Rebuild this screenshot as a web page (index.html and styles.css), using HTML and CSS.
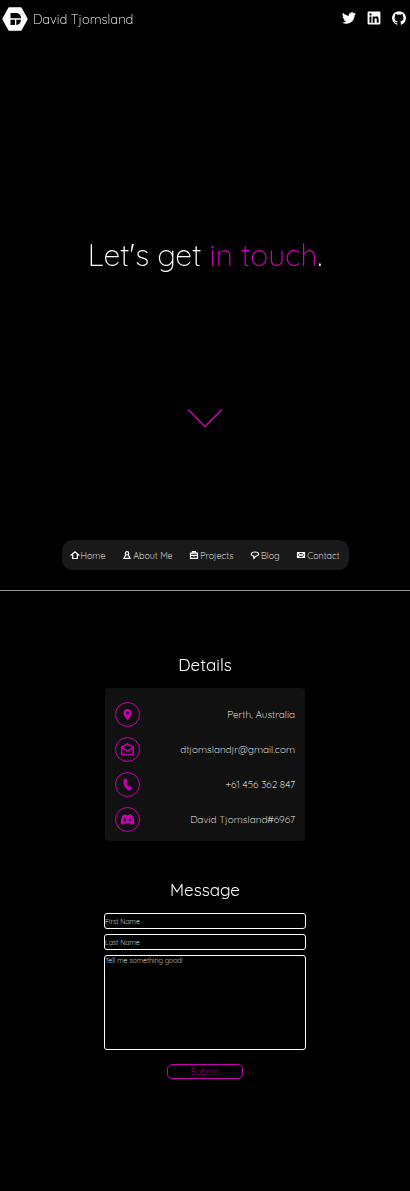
FILE: index.html
```html
<!DOCTYPE html>
<html lang="en">
<head>
<meta charset="utf-8">
<meta name="viewport" content="width=device-width, initial-scale=1">
<title>David Tjomsland | Contact</title>
<link rel="stylesheet" href="styles.css">
</head>
<body>
<div class="hero">
  <header class="header">
    <a class="brand" href="#">
      <svg class="logo" viewBox="0 0 26 24" aria-hidden="true"><path fill="#fff" d="M7 1h12l6 11-6 11H7L1 12z" stroke="#fff" stroke-width="1.500" stroke-linejoin="round"/><path d="M8.500 6H15q4 1 4 5.200H8.500zM8.500 12.800H13V18H8.500zM14.300 12.800H19Q18.500 17.500 14.300 18z"/></svg>
      <span>David Tjomsland</span>
    </a>
    <div class="social">
      <a href="#" aria-label="Twitter"><svg viewBox="0 0 24 24"><path d="M23.950 4.570a10 10 0 0 1-2.820.77 4.960 4.960 0 0 0 2.160-2.720 9.900 9.900 0 0 1-3.120 1.190 4.920 4.920 0 0 0-8.380 4.480C7.690 8.090 4.070 6.130 1.640 3.160a4.920 4.920 0 0 0 1.520 6.570 4.900 4.900 0 0 1-2.230-.61v.06a4.920 4.920 0 0 0 3.950 4.830 5 5 0 0 1-2.210.08 4.940 4.940 0 0 0 4.600 3.420A9.870 9.870 0 0 1 0 19.540a14 14 0 0 0 7.550 2.210c9.050 0 14-7.500 14-13.980v-.64a9.900 9.900 0 0 0 2.400-2.560z"/></svg></a>
      <a href="#" aria-label="LinkedIn"><svg viewBox="0 0 24 24"><path fill-rule="evenodd" d="M3 1h18q2 0 2 2v18q0 2-2 2H3q-2 0-2-2V3q0-2 2-2zm1.300 8.300V20h3.300V9.300zM6 4a2 2 0 1 0 0 4 2 2 0 0 0 0-4zm3.700 5.300V20H13v-5.300c0-3.200 3.700-3.200 3.700 0V20H20v-6.500c0-5.200-5.100-5.500-7-2.700V9.300z"/></svg></a>
      <a href="#" aria-label="GitHub"><svg viewBox="0 0 24 24"><path d="M12 .3a12 12 0 0 0-3.790 23.390c.6.110.820-.26.820-.58v-2.230c-3.340.72-4.040-1.410-4.040-1.410-.55-1.390-1.340-1.760-1.340-1.760-1.090-.74.080-.73.080-.73 1.210.08 1.840 1.240 1.840 1.240 1.070 1.830 2.810 1.300 3.490 1 .11-.78.420-1.310.76-1.610-2.660-.3-5.460-1.330-5.460-5.930 0-1.310.47-2.380 1.240-3.220-.13-.3-.54-1.520.11-3.180 0 0 1.010-.32 3.300 1.230a11.500 11.500 0 0 1 6.010 0c2.290-1.550 3.300-1.230 3.300-1.230.65 1.660.24 2.880.12 3.180.77.840 1.230 1.910 1.230 3.220 0 4.610-2.810 5.620-5.480 5.920.43.370.82 1.100.82 2.220v3.290c0 .32.220.69.830.57A12 12 0 0 0 12 .3z"/></svg></a>
    </div>
  </header>
  <h1 class="headline">Let's get <span class="accent">in touch</span>.</h1>
  <a class="down" href="#details" aria-label="Scroll to details"><svg viewBox="0 0 36 20"><path d="M1 1.500 18 18.500 35 1.500"/></svg></a>
  <nav class="nav">
    <a href="#"><svg viewBox="0 0 8 8"><path d="M.3 4 4 .7 7.700 4H6.300v3.500H1.700V4z"/></svg>Home</a>
    <a href="#"><svg viewBox="0 0 8 8"><circle cx="4" cy="2.300" r="1.700"/><path d="M2.700 3.700 1 7.400h6L5.300 3.700"/></svg>About Me</a>
    <a href="#"><svg viewBox="0 0 8 8"><path d="M.5 2.200h7v5.200h-7zM2.500 2V.6h3V2M.5 4.300h7M3.300 5h1.400"/></svg>Projects</a>
    <a href="#"><svg viewBox="0 0 8 8"><path d="M2.700 5C-1 4.500-.3 1 4 1s5 3.500 1 4L2.900 7.300z"/></svg>Blog</a>
    <a href="#"><svg viewBox="0 0 8 8"><path d="M.5 1.500h7v5h-7zM1 2l3 2.500L7 2M1 6l1.700-1.700M7 6 5.300 4.300"/></svg>Contact</a>
  </nav>
</div>
<main class="main">
  <section class="section" id="details">
    <h2>Details</h2>
    <ul class="card">
      <li><span class="ring"><svg viewBox="0 0 16 16"><path fill-rule="evenodd" d="M8 2a4.400 4.400 0 0 0-4.400 4.400C3.600 9 8 14 8 14s4.400-5 4.400-7.600A4.400 4.400 0 0 0 8 2zm0 2.800a1.600 1.600 0 1 1 0 3.200 1.600 1.600 0 0 1 0-3.200z"/></svg></span>Perth, Australia</li>
      <li><span class="ring"><svg viewBox="0 0 16 16"><path class="line" d="M1.800 5.500 8 2l6.200 3.500v8H1.800zM1.800 6 8 9.700 14.200 6"/></svg></span>dtjomslandjr@gmail.com</li>
      <li><span class="ring"><svg viewBox="0 0 16 16"><path d="M4.300 2 7 1.500l1 3.700-1.400 1.200q.5 2.300 2.300 3.700l1.900-.7 2.400 2.800-1.900 2C6.500 15.200 2 7 4.300 2z"/></svg></span>+61 456 362 847</li>
      <li><span class="ring"><svg viewBox="0 0 16 16"><path fill-rule="evenodd" d="M3 3.300 6 2.400l.6 1h2.800l.6-1 3 .9q2.500 4 2.300 8.900L12 13.900l-1-1.700H5l-1 1.700-3.300-1.700Q.5 7.300 3 3.300zm2.500 3.600a1.500 1.500 0 1 0 0 3 1.500 1.500 0 0 0 0-3zm5 0a1.500 1.500 0 1 0 0 3 1.500 1.500 0 0 0 0-3z"/></svg></span>David Tjomsland#6967</li>
    </ul>
  </section>
  <section class="section">
    <h2>Message</h2>
    <form class="form">
      <input type="text" aria-label="First Name" placeholder="First Name">
      <input type="text" aria-label="Last Name" placeholder="Last Name">
      <textarea aria-label="Message" placeholder="Tell me something good!"></textarea>
      <button type="submit">Submit</button>
    </form>
  </section>
</main>
</body>
</html>
```
FILE: styles.css
```css
* { box-sizing: border-box; }
body {
  margin: 0;
  background: #000;
  color: #fff;
  font-family: Quicksand, Lato, sans-serif;
  font-weight: 300;
}
a { color: inherit; text-decoration: none; }
.hero {
  display: flex;
  flex-direction: column;
  align-items: center;
  padding-bottom: 20px;
  border-bottom: 1px solid #999;
}
.header {
  align-self: stretch;
  display: flex;
  justify-content: space-between;
  align-items: center;
  height: 38px;
  padding: 0 3px 0 2px;
}
.header, .headline, h2, button { will-change: opacity; }
.brand { display: flex; align-items: center; gap: 5px; font-size: 13px; }
.logo { width: 26px; height: 24px; }
.social { display: flex; gap: 9px; padding-bottom: 2px; }
.social svg { display: block; width: 16px; height: 16px; padding: 1px; fill: #fff; overflow: visible; }
.headline {
  margin: 196px 0 0;
  font-size: 30px;
  line-height: 42px;
  font-weight: 300;
}
.accent { color: #d200be; }
.down { margin-top: 132px; }
.down svg { display: block; width: 36px; height: 20px; fill: none; stroke: #e600d2; stroke-width: 1.2; }
.nav {
  display: flex;
  justify-content: space-between;
  align-items: center;
  width: 70%;
  height: 30px;
  margin-top: 112px;
  padding: 0 9px;
  border-radius: 10px;
  background: #191919;
  font-size: 9px;
}
.nav a { display: flex; align-items: center; gap: 2px; }
.nav svg { width: 8px; height: 8px; fill: none; stroke: #fff; stroke-width: 1.2; overflow: visible; }
.main { padding: 60px 0 111px; }
.section { width: 202px; margin: 0 auto; }
.section + .section { margin-top: 35px; }
h2 {
  margin: 0 0 9px;
  text-align: center;
  font-size: 17px;
  line-height: 28px;
  font-weight: 400;
}
.card {
  display: flex;
  flex-direction: column;
  gap: 10px;
  margin: 0 1px;
  padding: 14px 10px 9px;
  border-radius: 4px;
  background: #111;
  list-style: none;
  font-size: 10px;
}
.card li { display: flex; justify-content: space-between; align-items: center; }
.ring {
  display: grid;
  place-items: center;
  width: 25px;
  height: 25px;
  border: 1px solid #c800b4;
  border-radius: 50%;
}
.ring svg { width: 15px; height: 15px; fill: #c800b4; }
.ring .line { fill: none; stroke: #c800b4; stroke-width: 1.5; }
.form { display: flex; flex-direction: column; gap: 5px; }
input, textarea {
  width: 100%;
  margin: 0;
  padding: 0;
  border: 1px solid #fff;
  border-radius: 3px;
  background: #000;
  color: #fff;
  font: inherit;
  font-size: 7px;
}
input { height: 16px; }
textarea { display: block; height: 95px; resize: none; }
::placeholder { color: #fff; opacity: 1; }
button {
  align-self: center;
  width: 76px;
  height: 15px;
  margin-top: 9px;
  padding: 0;
  border: 1px solid #c800b4;
  border-radius: 5px;
  background: #000;
  color: #d200be;
  font: inherit;
  font-size: 9px;
  line-height: 12px;
}
```
